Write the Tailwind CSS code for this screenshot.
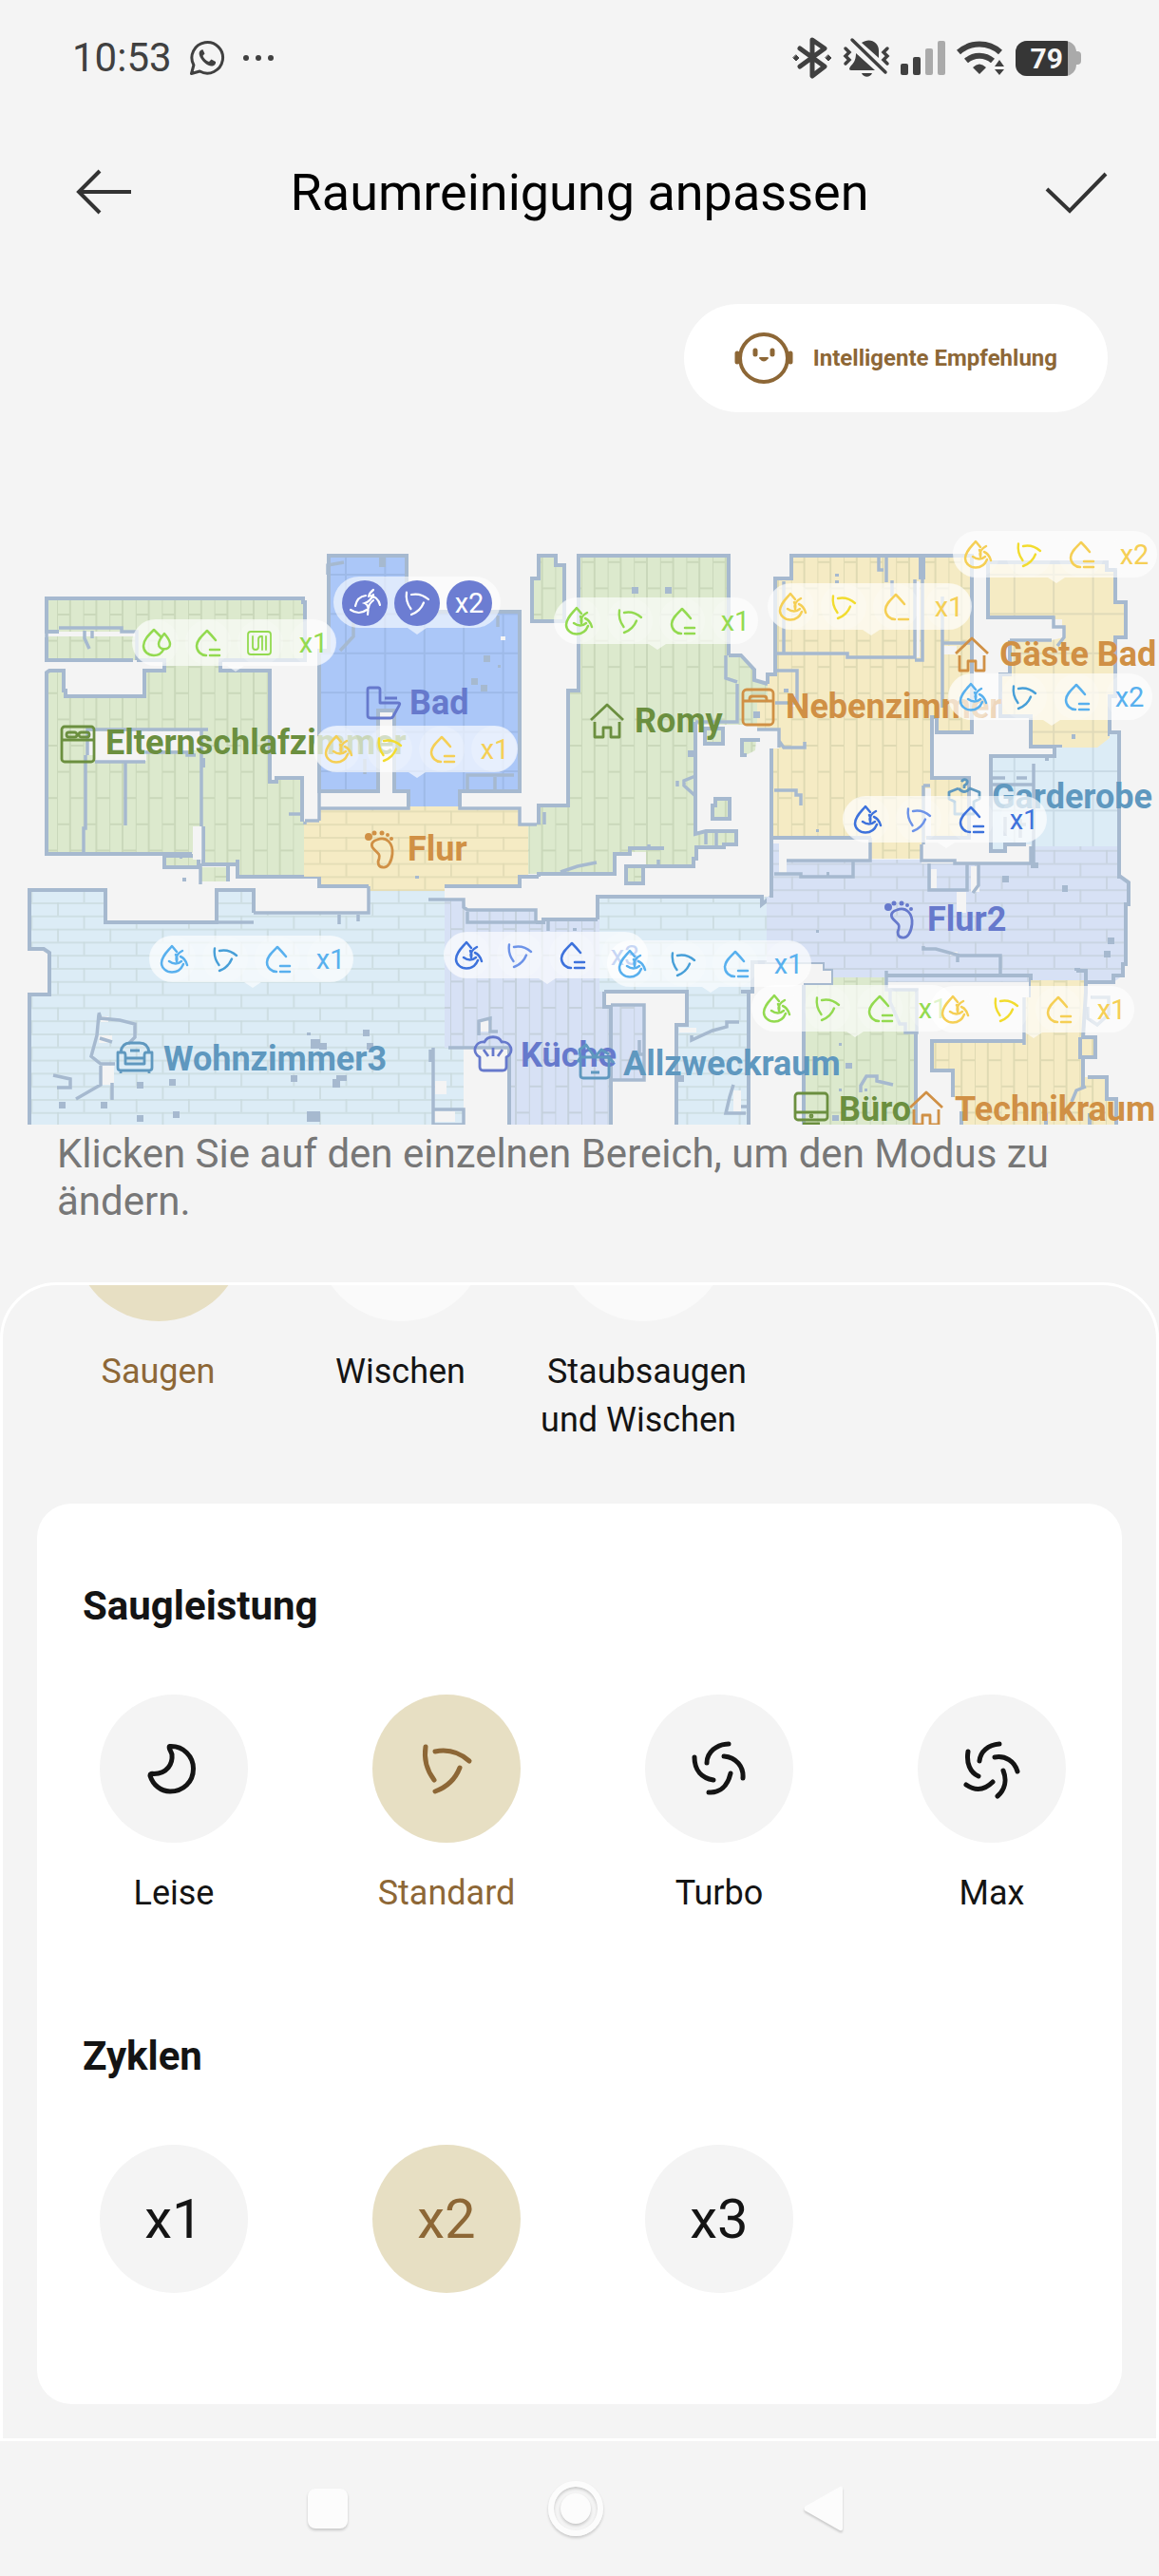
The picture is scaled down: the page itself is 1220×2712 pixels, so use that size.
<!DOCTYPE html>
<html lang="de">
<head>
  <meta charset="UTF-8" />
  <meta name="viewport" content="width=device-width, initial-scale=1.0" />
  <title>Raumreinigung anpassen</title>
  <script src="https://cdn.jsdelivr.net/npm/@tailwindcss/browser@4"></script>
</head>
<body class="min-h-screen bg-[#f4f4f4] text-[#141414] font-[Roboto,sans-serif] overflow-x-hidden">
  <!-- Status bar -->
  <div class="h-[122px] pl-[76px] pr-[82px] flex items-center justify-between text-[#404040]">
    <div class="flex items-center gap-[18px]">
      <span class="text-[42px] leading-[50px]">10:53</span>
      <svg class="w-[38px] h-[38px]" viewBox="0 0 38 38" fill="none" stroke="currentColor" stroke-width="3">
        <path d="M2.5 35.5l2.4-9A16.3 16.3 0 1 1 11.300 33z" stroke-linejoin="round" />
        <path d="M13 10.500c-3 1.500-3 5-.5 9s7 8 11 8c3 0 5-2 4.500-4.500l-4.500-2.500-2.500 2.500c-3-1-5.500-3.500-6.500-6.300l2-2.200-2-4.200z" fill="currentColor" stroke="none" />
      </svg>
      <svg class="w-[34px] h-[8px]" viewBox="0 0 34 8" fill="currentColor"><circle cx="4" cy="4" r="3" /><circle cx="17" cy="4" r="3" /><circle cx="30" cy="4" r="3" /></svg>
    </div>
    <div class="flex items-center gap-[11px]">
      <svg class="w-[42px] h-[44px]" viewBox="0 0 42 44" fill="none" stroke="currentColor" stroke-width="5" stroke-linejoin="round" stroke-linecap="round">
        <path d="M8 12l26 19-13 10V3l13 9L8 31" />
        <path d="M4 19l3 3-3 3-3-3zM38 19l3 3-3 3-3-3z" fill="currentColor" stroke-width="1" />
      </svg>
      <svg class="w-[50px] h-[44px]" viewBox="0 0 50 44" fill="currentColor">
        <path d="M20 6C28 0 38 5 38 14v8zM14 17l20 18H9c-3 0-2-3 0-5 4-4 5-8 5-13zM20 38h11c-2 5-9 5-11 0z" />
        <path d="M10 3l35 34M3 12l4 4-4 4 4 4-4 4M47 12l-4 4 4 4-4 4 4 4" fill="none" stroke="currentColor" stroke-width="3.500" stroke-linecap="round" />
      </svg>
      <svg class="w-[47px] h-[38px]" viewBox="0 0 47 38" fill="currentColor">
        <rect x="0" y="25" width="8" height="12" rx="2" /><rect x="13" y="18" width="8" height="19" rx="2" />
        <rect x="26" y="9" width="8" height="28" rx="2" fill="#aaa" /><rect x="39" y="1" width="8" height="36" rx="2" fill="#aaa" />
      </svg>
      <svg class="w-[52px] h-[38px]" viewBox="0 0 52 38" fill="none" stroke="currentColor" stroke-width="6">
        <path d="M3 13a33 33 0 0 1 44 0M11 22a21 21 0 0 1 28 0" />
        <path d="M25 36l-7-7q7-7 14 0zM46 21l5 7H41zM46 37l5-6H41z" fill="currentColor" stroke="none" />
      </svg>
      <div class="flex items-center">
        <div class="w-[64px] h-[37px] rounded-[12px] overflow-hidden bg-[#aaa] flex">
          <div class="w-[55px] h-full bg-[#363636] text-[#f4f4f4] text-[30px] leading-[37px] font-bold text-right pr-[5px]">79</div>
        </div>
        <div class="w-[5px] h-[14px] rounded-r-[4px] bg-[#aaa]"></div>
      </div>
    </div>
  </div>

  <!-- Title bar -->
  <header class="h-[162px] grid grid-cols-[1fr_auto_1fr] items-center">
    <div class="pl-20 flex">
      <button type="button" aria-label="Zurück" class="w-[60px] h-[50px]">
        <svg class="w-[60px] h-[50px]" viewBox="0 0 60 50" fill="none" stroke="#333" stroke-width="4"><path d="M58 24H3M25 2L3 24l22 22" /></svg>
      </button>
    </div>
    <h1 class="text-[54px] leading-[64px] text-black">Raumreinigung anpassen</h1>
    <div class="pr-[54px] flex justify-end">
      <button type="button" aria-label="Speichern" class="w-[66px] h-[46px]">
        <svg class="w-[66px] h-[46px]" viewBox="0 0 66 46" fill="none" stroke="#333" stroke-width="4"><path d="M2 19l24 23L64 3" /></svg>
      </button>
    </div>
  </header>

  <div class="flex justify-end pr-[54px] pt-9">
    <button type="button" class="h-[114px] rounded-full bg-white px-[53px] flex items-center gap-[21px] text-[#8d6736] text-[24px] leading-[32px] font-bold">
      <svg class="w-[62px] h-[58px]" viewBox="0 0 62 58" fill="none" stroke="currentColor" stroke-width="4" stroke-linecap="round">
        <circle cx="31" cy="29" r="25" />
        <path d="M3 24v9M59 24v9" stroke-width="5" />
        <path d="M22 21v4M40 21v4" stroke-width="5" />
        <path d="M27 29q4 5 8 0z" fill="currentColor" stroke-width="2" stroke-linejoin="round" />
      </svg>
      Intelligente Empfehlung
    </button>
  </div>

  <!-- Floor plan -->
  <svg id="map" class="block w-full h-auto mt-[106px]" viewBox="0 540 1220 644" font-family="Roboto, sans-serif">
    <defs>
      <pattern id="planks" x="60" y="646" width="27.6" height="55.2" patternUnits="userSpaceOnUse">
        <path d="M0 0V55.200M13.800 0V55.200M0 1H13.800M13.800 28.500H27.600" fill="none" stroke="#50643c" stroke-opacity=".13" stroke-width="2" />
      </pattern>
      <pattern id="bricks" x="60" y="950" width="55.2" height="27.6" patternUnits="userSpaceOnUse">
        <path d="M0 1H55.200M0 14.800H55.200M1 0V13.800M28.500 13.800V27.600" fill="none" stroke="#50643c" stroke-opacity=".13" stroke-width="1.600" />
      </pattern>
      <pattern id="tiles" x="363" y="604" width="41.4" height="41.4" patternUnits="userSpaceOnUse">
        <path d="M0 1H41.400M1 0V41.400" fill="none" stroke="#28465a" stroke-opacity=".1" stroke-width="2" />
      </pattern>

      <g id="fan"><path d="M-22-23Q-25-4-13 12M-12-18Q8-22 24-8M14-1Q7 17-12 24" /></g>
      <g id="drop-fan">
        <path d="M4-8L-1-14C-6-8-12-3-12 4C-12 9-7 13.500-1 13.500C5 13.500 9 10 11 5" />
        <path d="M10-9Q2-5 4 2M-4 2Q3 7 9 2M3-5Q5-2 4 2M8-3Q13-1 15 6" />
      </g>
      <g id="drops">
        <path d="M6-6L-2-14C-8-8-13-3-13 3C-13 9-8 13-2 13C3 13 6 11 8 7" />
        <path d="M9-10C5-5 3-3 3 1C3 8 15 8 15 1C15-3 13-5 9-10z" />
      </g>
      <g id="level1"><path d="M9-3Q4-9 0-13C-5-8-11-3-11 3C-11 9-6 13-1 13M3 13H13" /></g>
      <g id="level2"><use href="#level1" /><path d="M3 7H13" /></g>
      <g id="route"><rect x="-12" y="-12" width="24" height="24" rx="3" /><path d="M-7-7V4Q-7 7-4 7T-1 4V-4Q-1-7 2-7H3V7M7-7V7" /></g>
      <g id="mop-fan"><path d="M-15 7Q-6 13 2 7M-10 3Q-8-7 1-8M3 12Q5 2 0 0Q6-2 9-9M4-7Q5-11 9-14M5-8Q14-7 16 2M4 5Q4 1 9-3" /></g>

      <g id="house"><path d="M-17-1L0-17L17-1M-13 1V17H-4V7H4V17H13V1" /></g>
      <g id="foot">
        <path d="M-2-10C8-14 15-6 14 5C13 14 9 20 4 19C-1 19-2 14 0 10C2 4-4 3-7-2C-9-6-6-9-2-10z" />
        <g fill="currentColor" stroke="none"><circle cx="-11" cy="-13" r="4" /><circle cx="-5" cy="-17" r="2.500" /><circle cx="3" cy="-17" r="2.500" /><circle cx="9" cy="-15" r="2" /><circle cx="13" cy="-11" r="2" /></g>
      </g>
      <g id="double-bed"><rect x="-17" y="-18" width="34" height="37" rx="3" /><path d="M-17-4H17" /><rect x="-12" y="-12" width="11" height="5" rx="2.500" /><rect x="1" y="-12" width="11" height="5" rx="2.500" /></g>
      <g id="bed"><rect x="-16" y="-18" width="32" height="37" rx="4" /><path d="M-16-6H16M-9-6V-8Q-9-11-6-11H6Q9-11 9-8V-6" /></g>
      <g id="toilet"><path d="M-15-16H-6Q-4-16-4-14V0H15Q18 0 16 3L10 14Q9 16 7 16H-14Q-17 16-17 13V-14Q-17-16-15-16zM1-5H14" /></g>
      <g id="shirt"><path d="M-6-9L-16-5V2L-10 5V18H10V5L16 2V-5L6-9Q0-2-6-9M0-9V-12Q4-14 3-17Q0-20-3-16" /></g>
      <g id="sofa"><path d="M-15-5C-14-14-9-15-5-15H5C9-15 14-14 15-5M-18-5H-12Q-10-5-10-2V7H10V-2Q10-5 12-5H18V11Q18 14 15 14H-15Q-18 14-18 11zM-10 1H10M-5-7H5M-15 14V17M15 14V17" /></g>
      <g id="chef"><path d="M-14 4C-23-1-19-13-9-12C-6-19 6-19 9-12C19-13 23-1 14 4V14Q14 18 10 18H-10Q-14 18-14 14zM0-6V3M-10-4L-5 3M10-4L5 3" /></g>
      <g id="box"><path d="M-16-4H14V15Q14 18 11 18H-13Q-16 18-16 15zM-16-4L-19 1M14-4L19 2M-16-4L-17-12L-10-17L-1-4L6-12L14-7M-5 12H4" /></g>
      <g id="monitor"><rect x="-17" y="-16" width="34" height="28" rx="3" /><path d="M-17 4H17M-9 16H9" /><circle cx="0" cy="8" r="1" /></g>
    </defs>

    <!-- Room floors and outlines: each shape is filled, tiled, then walled -->
    <g id="rooms"></g>

    <!-- Open floor inside rooms -->
    <path fill="#f4f4f4" d="M93 770H211V790H154V801H100V795H93zM203 870H213V905H203zM1007 939h10v22h-10zM1022 912h9v27h-9zM980 915h6v20h-6zM106 1070h8v6h-8zM106 1122h14v20h-14zM104 1090h14v8h-14zM458 1138h12v14h-12zM457 1170h22v11h-22zM506 1074h12v12h-12zM968 612h-3v80h3zM830 732h7v12h-7zM993 680h14v9h-14zM974 830h6v50h-6zM1109 652h9v18h-9zM820 884h95v20h-87v14h-8zM513 838h7v8h-7zM527 670h5v4h-5zM772 1148h8v22h-8zM1000 1002h8v4h-8zM715 1082h18v5h-18z" />
    <!-- Interior walls and furniture -->
    <path fill="none" stroke="#a6b9cf" stroke-width="3.5" d="M49 665V671M62 661H128V665H144V695M92 795V768H219M212 768V870M214 870V908M90 795V872H88V897M100 802H153M132 802V869M153 792H197V795H206M304 857H318M89 664V672L94 683M97 664V672M211 909V931M321 865V868M336 833V864M336 864H321M336 851H430V833M484 833V851H547V868H565M384 815V799M492 831V816H541M521 818V831M524 648V660M825 612V688M816 688H892V692H963V610M971 585V695H963M992 628V745M992 677H1023M933 587V613M925 585V600H930M939 611V628M816 706H839V740H816M820 780L825 787H847V781M815 832H838V837H843V848M820 787V768H797M972 827H979M972 827V889M828 906H916V882M898 906V923H843V920H815M970 889V906H1005V909H1085V891M978 909V937H1018V909M1030 909V932L1024 940M1088 804V912M1045 826H1088M1045 819H1058M1070 819H1081M1058 860V880M1074 862V882M1066 868H1080M388 933V961H267M228 971H267M357 963V973M377 963V970M492 960V971H564M577 970V980M451 947H488V955L492 958H564V971H572M456 1103V1184H488V1168H456M453 1105V1118M472 1103H536M504 1090V1075L516 1072V1086H524M643 1058H678V1137H643M673 1095V1110H678M972 996V999H985L1010 1006H1053V1027M1008 1007V1013M933 1022V1042H965V1087H953V1078H947L937 1055V1042M906 1150V1143L912 1133H923V1138L940 1142M778 1076H765V1081L750 1085L728 1095V1090M772 1142L768 1155L764 1172H785M780 1165H790M1040 650H1109V660H1120V671L1113 680M1063 674H1107M1078 1050V1100M1145 1060V1072L1155 1079L1167 1068V1050H1148M1128 1160L1133 1148L1143 1144M1088 894V906M104 1066L106 1072L126 1074L142 1078V1092L135 1099M104 1068L102 1090L96 1112L106 1120H121M106 1122V1142L80 1157M118 1140V1158M56 1132L74 1136V1145H60M105 1093L118 1097M345 605V595L362 592M358 685L372 670V655M776 720V760H732M764 690V714L776 718M743 875V889M754 875V892M573 855V868M590 918L608 912L628 908M683 893V889M693 905V912M681 760L684 757M713 822V828M732 817L720 822V827L732 838" />
    <path fill="#a6b9cf" d="M399 586h7v11h-7zM509 690h7v7h-7zM496 714h7v7h-7zM506 721h7v7h-7zM524 700h3v3h-3zM437 922h4v3h-4zM665 618h7v7h-7zM700 618h7v7h-7zM724 790h8v7h-8zM967 585h7v25h-7zM879 604h4v3h-4zM879 611h4v3h-4zM62 1160h7v7h-7zM106 1160h7v7h-7zM144 1139h7v7h-7zM178 1136h7v7h-7zM144 1174h7v7h-7zM182 1170h7v7h-7zM382 1084h7v7h-7zM386 1098h7v7h-7zM306 1132h7v7h-7zM350 1136h8v9h-8zM354 1132h11v6h-11zM323 1087h4v3h-4zM327 1094h10v10h-10zM336 1098h8v7h-8zM323 1170h14v11h-14zM1055 922h7v7h-7zM1118 932h6v7h-6zM1166 987h7v7h-7zM1162 1001h7v7h-7zM1085 908h8v6h-8zM1131 1019h6v3h-6zM883 1098h3v3h-3zM890 1119h7v6h-7zM876 1174h7v6h-7zM883 1146h3v3h-3zM910 1146h3v3h-3zM859 979h3v3h-3zM859 873h3v3h-3zM1128 773h4v5h-4zM1100 797h4v4h-4zM603 977h4v3h-4zM712 1132h8v7h-8zM793 749h7v7h-7zM825 725h5v4h-5zM192 924h4v4h-4zM189 901h3v3h-3zM212 798h4v10h-4zM870 918h3v4h-3z" />

    <!-- Room names -->
    <g id="labels" font-size="36" font-weight="700"></g>

    <!-- Cleaning settings per room -->
    <g id="bubbles"></g>
  </svg>

  <p class="px-[60px] pt-[6px] text-[42px] leading-[50px] text-[#777]">Klicken Sie auf den einzelnen Bereich, um den Modus zu ändern.</p>

  <!-- Settings sheet -->
  <main class="mt-[60px] border-[3px] border-white rounded-t-[60px] px-9 pb-9 text-[36px] leading-[51px]">
    <fieldset class="flex">
      <legend class="sr-only">Modus</legend>
      <label class="w-[255px] flex flex-col items-center gap-7 text-[#8d6736]">
        <input type="radio" name="mode" class="sr-only" checked />
        <span class="h-[38px] overflow-hidden flex items-end"><span class="shrink-0 size-[180px] rounded-full bg-[#e7dfc3]"></span></span>
        <span>Saugen</span>
      </label>
      <label class="w-[255px] flex flex-col items-center gap-7">
        <input type="radio" name="mode" class="sr-only" />
        <span class="h-[38px] overflow-hidden flex items-end"><span class="shrink-0 size-[180px] rounded-full bg-[#fafafa]"></span></span>
        <span>Wischen</span>
      </label>
      <label class="w-[255px] flex flex-col items-center gap-7">
        <input type="radio" name="mode" class="sr-only" />
        <span class="h-[38px] overflow-hidden flex items-end"><span class="shrink-0 size-[180px] rounded-full bg-[#fafafa]"></span></span>
        <span class="text-center">&nbsp;Staubsaugen<br />und Wischen&nbsp;</span>
      </label>
    </fieldset>

    <div class="mt-[62px] bg-white rounded-[36px] pt-20 pb-[117px]">
      <h2 class="px-12 text-[42px] leading-[56px] font-bold">Saugleistung</h2>
      <div class="mt-[65px] pl-[66px] pr-[59px] grid grid-cols-4 gap-[131px]">
        <label class="flex flex-col items-center gap-7">
          <input type="radio" name="power" class="sr-only" />
          <span class="size-[156px] rounded-full bg-[#f4f4f4] flex items-center justify-center">
            <svg class="size-[80px]" viewBox="-40 -40 80 80" fill="none" stroke="currentColor" stroke-width="5" stroke-linejoin="round"><path d="M-4-23.500C10-24 20.500-13 20.500 0C20.500 14 10 24 -4 24C-14 24-22 17-25 7.500C-25 5-23 5-21 5.500C-7 5-1-5-2-15C-4-20-6-23-4-23.500z" /></svg>
          </span>
          <span>Leise</span>
        </label>
        <label class="flex flex-col items-center gap-7 text-[#8d6736]">
          <input type="radio" name="power" class="sr-only" checked />
          <span class="size-[156px] rounded-full bg-[#e7dfc3] flex items-center justify-center">
            <svg class="size-[80px]" viewBox="-40 -40 80 80" fill="none" stroke="currentColor" stroke-width="5" stroke-linecap="round"><use href="#fan" /></svg>
          </span>
          <span>Standard</span>
        </label>
        <label class="flex flex-col items-center gap-7">
          <input type="radio" name="power" class="sr-only" />
          <span class="size-[156px] rounded-full bg-[#f4f4f4] flex items-center justify-center">
            <svg class="size-[80px]" viewBox="-40 -40 80 80" fill="none" stroke="currentColor" stroke-width="5" stroke-linecap="round"><path d="M10-26C-3-26-13-17-13-6M-26-12C-26 2-18 10-6 12M5-13C18-12 26-2 25 10M12 5C9 18 1 26-11 25" /></svg>
          </span>
          <span>Turbo</span>
        </label>
        <label class="flex flex-col items-center gap-7">
          <input type="radio" name="power" class="sr-only" />
          <span class="size-[156px] rounded-full bg-[#f4f4f4] flex items-center justify-center">
            <svg class="size-[80px]" viewBox="-40 -40 80 80" fill="none" stroke="currentColor" stroke-width="5" stroke-linecap="round"><path d="M8-26C-4-25-12-18-13-8M-25-18C-27-6-23 4-14 8M3-12C14-14 24-8 27 3M12 2C16 12 14 22 6 29M-27 17C-17 24-8 23 1 14" /></svg>
          </span>
          <span>Max</span>
        </label>
      </div>

      <h2 class="mt-[118px] px-12 text-[42px] leading-[56px] font-bold">Zyklen</h2>
      <div class="mt-[65px] pl-[66px] pr-[59px] grid grid-cols-4 gap-[131px] text-[58px]">
        <label class="size-[156px] rounded-full bg-[#f4f4f4] flex items-center justify-center"><input type="radio" name="cycles" class="sr-only" />x1</label>
        <label class="size-[156px] rounded-full bg-[#e7dfc3] text-[#8d6736] flex items-center justify-center"><input type="radio" name="cycles" class="sr-only" checked />x2</label>
        <label class="size-[156px] rounded-full bg-[#f4f4f4] flex items-center justify-center"><input type="radio" name="cycles" class="sr-only" />x3</label>
      </div>
    </div>
  </main>

  <!-- System navigation -->
  <nav class="h-[142px] flex items-center justify-center gap-[211px] pr-[8px]">
    <button type="button" aria-label="Übersicht" class="size-[42px] rounded-[8px] bg-[#fcfcfc] shadow-[0_2px_3px_rgba(0,0,0,0.18)]"></button>
    <button type="button" aria-label="Startseite" class="size-[58px] rounded-full border-[6px] border-[#fcfcfc] shadow-[0_2px_3px_rgba(0,0,0,0.18),inset_0_2px_3px_rgba(0,0,0,0.18)] flex items-center justify-center">
      <span class="size-[32px] rounded-full bg-[#fcfcfc] shadow-[0_2px_3px_rgba(0,0,0,0.18)]"></span>
    </button>
    <button type="button" aria-label="Zurück" class="w-[42px] h-[52px]">
      <svg class="w-[42px] h-[52px] drop-shadow-[0_2px_1px_rgba(0,0,0,0.18)]" viewBox="0 0 42 52" fill="#fcfcfc"><path d="M1 24Q0 26 1 28L38 49Q41 50 41 47V5Q41 2 38 3z" /></svg>
    </button>
  </nav>

  <script>
    const floor = {
      green: "#dce9cd", yellow: "#f5ebc4", sky: "#dcecf6", lilac: "#d7e1f5", blue: "#abc7f8"
    };

    // floor colour, tiling, floor area, walls (the area itself when left out)
    const rooms = [
      ["sky", "bricks", "M31 937H111V971H228V937H267V961H388V936H468V948H472V1103H488V1184H31V1047H52V1003L46 999H31z", "M31 1184V1047H52V1003L46 999H31V937H111V971H228V937H267V961"],
      ["lilac", "planks", "M468 948H488L492 958H564V971H572V968H631V1044H636V1060H643V1058H678V1137H643V1184H536V1103H468z", "M564 971H572V968H629M636 1044V1060H643V1184M536 1184V1103"],
      ["sky", "bricks", "M631 944H807V1013H792V1044H788V1184H712V1079H723V1044H631z", "M629 968V944H802V952L812 944M780 1044H792V1013H868V1020H877V1037H846M788 1044V1184M712 1184V1079H723V1044H636"],
      ["lilac", "bricks", "M812 888H820V920H828V905H970V909H1085V891H1178V922L1188 929V952H1185V1017H1182V1027L1172 1034H877V1020H868V1013H807V944H812z", "M812 882V944M1178 891V922L1188 929V952H1185V1015H1182V1027H1172V1034H1143V1022H1133M1085 1050V1027H933"],
      ["green", "planks", "M49 630H319V634H321V695H232V706H284V823H291V819H318V865H320V922H250V910H214V870L202 899H49V708L52 706H67V727H69V733H152V706H173V695H49V670H144V665H49z", "M318 865V819H291V823H284V706H232V695H321V634H319V630H49V665H62M49 671V695H140M144 695H173V706H152V733H69V727H67V706H52L49 708V899H202M214 870V910H250M250 905V923H336"],
      ["green", "planks", "M173 901H209V913H173z"],
      ["green", "planks", "M212 913H240V928H212z", "M240 928V911"],
      ["blue", "tiles", "M346 585H428V644H547V833H484V849H430V833H415V748H398V833H336V685H346z", "M430 849V833H415V748H398V833H336V685H346V585H428V644H547V833H484V849"],
      ["yellow", "bricks", "M320 864H336V852H430V849H484V852H547V868H556V923H547V933H468V938H389V933H336V923H320z", "M336 923V933H388M468 933H547V923H567"],
      ["green", "planks", "M567 585H585V595H594V654H560V609H567z"],
      ["green", "planks", "M609 585H767V690H780L794 705V716L808 720V763H732V875H775V889H762V892H733V904H730V912H680V897H663V899H647V920H556V868H565V848H598V727H609z", "M567 923V920H647V899H663V893H699M673 912H730V904H733V892H762V889H775V875H743L732 878V760M767 690V585H609V727H598V848H567V868M767 690H780L794 705V716L808 720"],
      ["green", "planks", "M659 912H677V930H659z"],
      ["green", "planks", "M742 767H761V783H742z"],
      ["green", "planks", "M781 778H796L795 790L785 795H781z", "M800 779H781V795H786"],
      ["green", "planks", "M753 841H768V862H750V848H753z"],
      ["yellow", "planks", "M833 585H1023V771H986V755H981V819H1020V882H970V904H917V882H812V788H820V768H797V740H808V710H816V609H833z", "M812 945V788M808 720V710H816V609H833V585H1023V771H986V755H981V819H1020V882H975M917 882H812"],
      ["yellow", "tiles", "M1040 592H1165V600H1174V634H1185V671H1174V733H1168V777L1155 788H1085V754H1053V710H1063V674H1107L1120 671V662H1109V650H1040z", "M1168 775V733H1174V671H1185V634H1174V600H1165V592H1040V650H1109M1063 674V710H1053V754H1085V786H1118"],
      ["sky", "tiles", "M1110 787H1155L1168 777V771H1178V891H1085V889H1058V896H1043V796H1110z", "M1168 771H1178V925M1110 786V796H1043V896H1058V889H1080"],
      ["green", "planks", "M846 1037H877V1029H933V1042H965V1184H846z", "M846 1184V1037M964 1087V1184"],
      ["yellow", "planks", "M1085 1032H1142V1092H1153V1113H1140V1134H1165V1157H1175V1184H1012V1155H1003V1127H981V1096H1078V1050H1085z", "M1012 1184V1170M1003 1155V1127H981V1096H1078M1143 1022V1045L1140 1092H1153V1113H1137V1092M1140 1113V1144M1145 1134H1165V1157H1175V1184M1101 1184V1172M1147 1184V1172"]
    ];
    document.getElementById("rooms").innerHTML = rooms.map(([color, tile, area, walls]) => `
      <path d="${area}" fill="${floor[color]}" />
      <path d="${area}" fill="url(#${tile})" />
      <path d="${walls || area}" fill="none" stroke="#a6b9cf" stroke-width="4" />`).join("");

    // name, text x, baseline y, colour, icon, icon centre
    const labels = [
      ["Elternschlafzimmer", 111, 794, "#6b8f3f", "double-bed", 82, 783],
      ["Bad", 431, 752, "#6679cc", "toilet", 404, 740],
      ["Romy", 668, 771, "#6b8f3f", "house", 639, 759],
      ["Flur", 429, 906, "#d09045", "foot", 399, 894],
      ["Nebenzimmer", 827, 756, "#d09045", "bed", 798, 744],
      ["Gäste Bad", 1052, 701, "#d09045", "house", 1023, 689],
      ["Garderobe", 1044, 851, "#5f98bf", "shirt", 1015, 839],
      ["Wohnzimmer3", 172, 1127, "#5f98bf", "sofa", 142, 1113],
      ["Küche", 548, 1123, "#6679cc", "chef", 519, 1109],
      ["Allzweckraum", 656, 1132, "#5f98bf", "box", 627, 1117],
      ["Flur2", 976, 980, "#6679cc", "foot", 946, 968],
      ["Büro", 883, 1180, "#6b8f3f", "monitor", 854, 1167],
      ["Technikraum", 1005, 1180, "#d09045", "house", 975, 1167]
    ];
    document.getElementById("labels").innerHTML = labels.map(([name, x, y, color, icon, ix, iy]) => `
      <g color="${color}">
        <use href="#${icon}" x="${ix}" y="${iy}" fill="none" stroke="currentColor" stroke-width="2.800" stroke-linejoin="round" />
        <text x="${x}" y="${y}" fill="currentColor">${name}</text>
      </g>`).join("");

    // left, top, passes, colour, suction colour, mop icon, water level
    const bubbles = [
      [139, 652, "x1", "#93da50", "#93da50", "drops", "level2"],
      [330, 764, "x1", "#f5cf55", "#f2dc2e", "drop-fan", "level2"],
      [583, 629, "x1", "#93da50", "#93da50", "drop-fan", "level2"],
      [808, 614, "x1", "#f5cf55", "#f2dc2e", "drop-fan", "level1"],
      [1003, 559, "x2", "#f5cf55", "#f2dc2e", "drop-fan", "level2"],
      [998, 709, "x2", "#58b0ee", "#479fd8", "drop-fan", "level2"],
      [887, 838, "x1", "#3d72dc", "#6d93e8", "drop-fan", "level2"],
      [157, 985, "x1", "#58b0ee", "#479fd8", "drop-fan", "level2"],
      [467, 981, "x3", "#3d72dc", "#6d93e8", "drop-fan", "level2"],
      [639, 990, "x1", "#58b0ee", "#479fd8", "drop-fan", "level2"],
      [791, 1037, "x1", "#93da50", "#93da50", "drop-fan", "level2"],
      [979, 1038, "x1", "#f5cf55", "#f2dc2e", "drop-fan", "level2"]
    ];
    document.getElementById("bubbles").innerHTML = bubbles.map(([x, y, count, color, suction, mop, level]) => `
      <g transform="translate(${x} ${y})" fill="none" stroke="${color}" stroke-width="2.500" stroke-linecap="round" stroke-linejoin="round">
        <path d="M24.500 0H190.500A24.500 24.500 0 0 1 190.500 49H118L109 55L100 49H24.500A24.500 24.500 0 0 1 24.500 0z" fill="#fff" fill-opacity=".64" stroke="none" />
        <g fill="#fff" fill-opacity=".2" stroke="none"><circle cx="25" cy="24.500" r="24" /><circle cx="80" cy="24.500" r="24" /><circle cx="135" cy="24.500" r="24" /><circle cx="190" cy="24.500" r="24" /></g>
        <use href="#${mop}" x="25" y="25" />
        ${mop === "drops"
          ? `<use href="#level2" x="79" y="25" /><use href="#route" x="134" y="25" stroke-width="1.800" />`
          : `<g transform="translate(80 25) scale(.5)" stroke="${suction}" stroke-width="4.800"><use href="#fan" /></g><use href="#${level}" x="135" y="25" />`}
        <text x="191" y="35" text-anchor="middle" font-size="29" fill="${color}" stroke="none">${count}</text>
      </g>`).join("") + `
      <g fill="none" stroke="#fff" stroke-width="2.200" stroke-linecap="round">
        <path d="M378 607H500A27 27 0 0 1 500 661H449L439 668L429 661H378A27 27 0 0 1 378 607z" fill="#fff" fill-opacity=".6" stroke="none" />
        <g fill="#6c7dd2" stroke="none"><circle cx="384" cy="635" r="24" /><circle cx="439" cy="635" r="24" /><circle cx="494" cy="635" r="24" /></g>
        <use href="#mop-fan" x="384" y="635" />
        <g transform="translate(439 635) scale(.5)" stroke-width="4.400"><use href="#fan" /></g>
        <text x="494" y="645" text-anchor="middle" font-size="29" fill="#fff" stroke="none">x2</text>
      </g>`;
  </script>
</body>
</html>
